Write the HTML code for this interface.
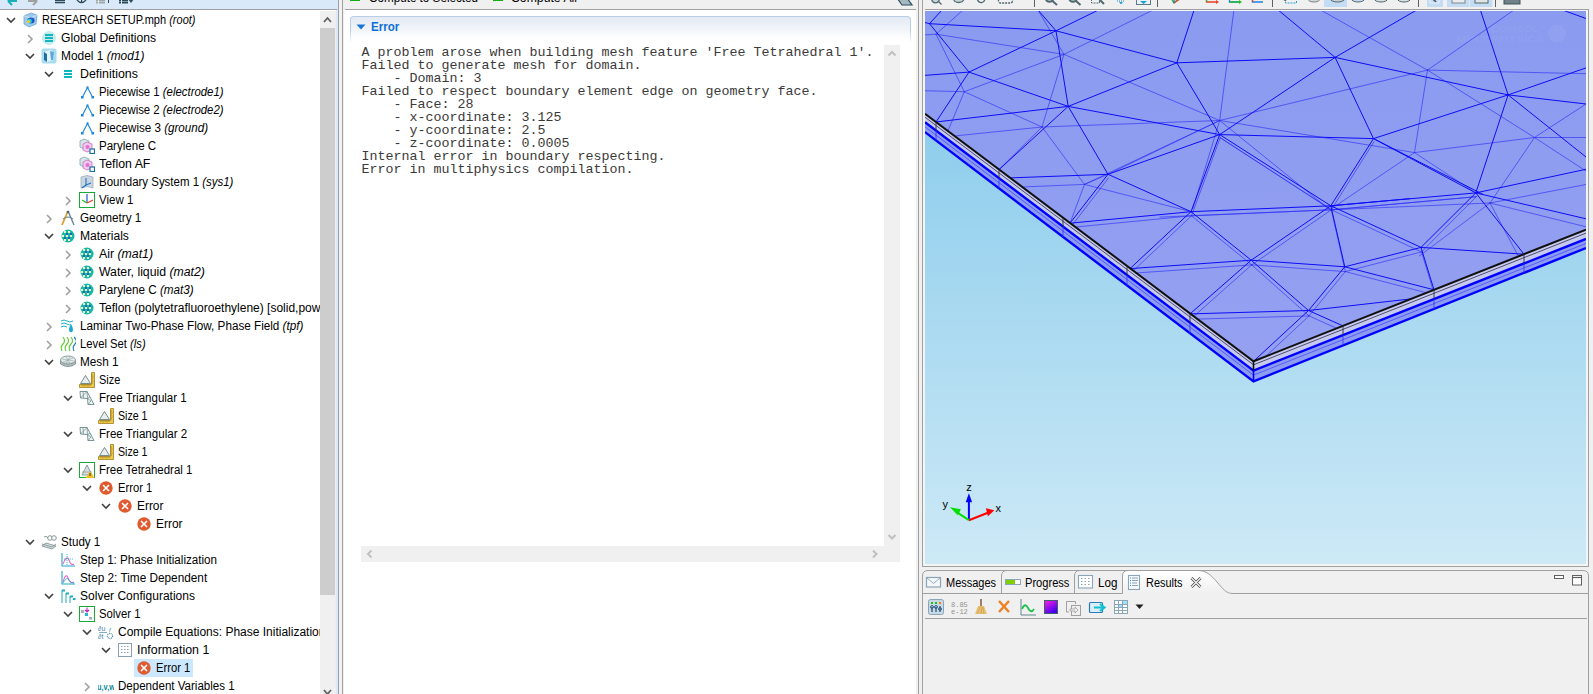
<!DOCTYPE html><html><head><meta charset="utf-8"><style>
*{margin:0;padding:0;box-sizing:border-box}
html,body{width:1593px;height:694px;overflow:hidden;background:#f0f0f0;font-family:"Liberation Sans",sans-serif;font-size:12px;color:#000}
.a{position:absolute}
.row{position:absolute;height:18px;white-space:nowrap}
.tx{position:absolute;top:0;line-height:17px;font-size:12px;transform-origin:0 0;white-space:nowrap}
.tx i{font-style:italic}
.ic{position:absolute;width:16px;height:16px}
.chev{position:absolute}
.mono{font-family:"Liberation Mono",monospace;font-size:13.33px;line-height:13px;white-space:pre;color:#3a3a3a}

</style></head><body>
<div class="a" style="left:0;top:0;width:338px;height:694px;background:#dae9f9"></div>
<div class="a" style="left:0;top:9px;width:337px;height:1px;background:#a0a0a0"></div>
<div class="a" style="left:0;top:10px;width:336px;height:684px;background:#fff"></div>
<svg class="a" style="left:0;top:0" width="140" height="9">
<path d="M8 1 L12 -3 M8 1 L12 5 M8 1 L17 1" stroke="#18b0b8" stroke-width="2" fill="none"/>
<path d="M37 1 L33 -3 M37 1 L33 5 M37 1 L28 1" stroke="#a0a0a0" stroke-width="2" fill="none"/>
<rect x="55" y="0" width="10" height="1.3" fill="#2a4a5a"/><rect x="55" y="2" width="10" height="1.3" fill="#2a4a5a"/>
<path d="M77 0 Q81.5 5 86 0" stroke="#2a4a5a" stroke-width="1.3" fill="none"/><rect x="81" y="0" width="1.2" height="2" fill="#2a4a5a"/>
<rect x="96" y="0" width="2" height="1.5" fill="#a0a8a8"/><rect x="99" y="0" width="6" height="1.5" fill="#a0a8a8"/><rect x="96" y="2" width="2" height="1.5" fill="#a0a8a8"/><rect x="99" y="2" width="6" height="1.5" fill="#a0a8a8"/><rect x="108" y="0" width="1" height="3" fill="#2a4a5a"/>
<rect x="119" y="0" width="2" height="1.5" fill="#2a4a5a"/><rect x="122" y="0" width="6" height="1.5" fill="#2a4a5a"/><rect x="119" y="2" width="2" height="1.5" fill="#2a4a5a"/><rect x="122" y="2" width="6" height="1.5" fill="#2a4a5a"/><path d="M128 -1 L134 -1 L131 3Z" fill="#2a4a5a"/>
</svg>
<div class="a" style="left:320px;top:11px;width:15px;height:683px;background:#f0f0f0"></div>
<div class="a" style="left:320px;top:28px;width:15px;height:567px;background:#cdcdcd"></div>
<div class="a" style="left:335px;top:11px;width:1px;height:683px;background:#eeeeee"></div>
<svg class="a" style="left:320px;top:11px" width="15" height="17"><path d="M4 11 L7.5 7 L11 11" stroke="#606060" stroke-width="1.8" fill="none"/></svg>
<svg class="a" style="left:320px;top:684px" width="15" height="10"><path d="M4 6 L7.5 10 L11 6" stroke="#606060" stroke-width="1.8" fill="none"/></svg>
<div class="a" style="left:338px;top:0;width:1px;height:694px;background:#a0a0a0"></div>
<div class="a" style="left:339px;top:0;width:3px;height:694px;background:#f2f2f2"></div>
<div class="a" style="left:342px;top:0;width:1px;height:694px;background:#a0a0a0"></div>
<div class="a" style="left:0;top:11px;width:320px;height:683px;overflow:hidden">
<svg class="chev" style="left:5.5px;top:4px" width="10" height="10"><path d="M1 3 L5 7 L9 3" stroke="#404040" stroke-width="1.6" fill="none"/></svg>
<svg class="ic" style="left:22px;top:1px" viewBox="0 0 16 16"><path d="M2 4 L9 1 L15 3 L14 12 L7 15 L2 12 Z" fill="#9ccbea" stroke="#6aa6d6" stroke-width="0.8"/><path d="M2 4 L9 6 L15 3" fill="none" stroke="#d8ecf8" stroke-width="0.8"/><ellipse cx="9" cy="8.5" rx="3.6" ry="3" fill="#1c58c8"/><ellipse cx="7.6" cy="9" rx="2.4" ry="2.2" fill="#2fc9d4"/><ellipse cx="6.5" cy="9.4" rx="1.6" ry="1.5" fill="#f0d020"/></svg>
<div class="tx" style="left:42px;top:1px;transform:scaleX(0.9182)">RESEARCH SETUP.mph <i>(root)</i></div>
<svg class="chev" style="left:24.5px;top:23px" width="10" height="10"><path d="M3 1 L7 5 L3 9" stroke="#a0a0a0" stroke-width="1.6" fill="none"/></svg>
<svg class="ic" style="left:41px;top:19px" viewBox="0 0 16 16"><circle cx="8" cy="8" r="7" fill="#c7ecec"/><rect x="4" y="4" width="8" height="2" fill="#10b7c0"/><rect x="4" y="7" width="8" height="2" fill="#10b7c0"/><rect x="4" y="10" width="8" height="2" fill="#10b7c0"/></svg>
<div class="tx" style="left:61px;top:19px;transform:scaleX(1.0110)">Global Definitions</div>
<svg class="chev" style="left:24.5px;top:40px" width="10" height="10"><path d="M1 3 L5 7 L9 3" stroke="#404040" stroke-width="1.6" fill="none"/></svg>
<svg class="ic" style="left:41px;top:37px" viewBox="0 0 16 16"><rect x="0.5" y="0.5" width="15" height="15" rx="2" fill="#a8dcef"/><path d="M3 4 L9 2 L13 4 L12 12 L6 14 L3 12 Z" fill="#e8f4fb"/><path d="M3 4 L6 6 L6 14 L3 12 Z" fill="#1f6fa8"/><path d="M9 3 L13 4 L12 12 L10 12 Z" fill="#5aa9d8"/></svg>
<div class="tx" style="left:61px;top:37px;transform:scaleX(0.9923)">Model 1 <i>(mod1)</i></div>
<svg class="chev" style="left:43.5px;top:58px" width="10" height="10"><path d="M1 3 L5 7 L9 3" stroke="#404040" stroke-width="1.6" fill="none"/></svg>
<svg class="ic" style="left:60px;top:55px" viewBox="0 0 16 16"><rect x="4" y="4" width="8" height="2" fill="#10b7c0"/><rect x="4" y="7" width="8" height="2" fill="#10b7c0"/><rect x="4" y="10" width="8" height="2" fill="#10b7c0"/></svg>
<div class="tx" style="left:80px;top:55px;transform:scaleX(1.0334)">Definitions</div>
<svg class="ic" style="left:79px;top:73px" viewBox="0 0 16 16"><path d="M3.5 13 L8.5 3.5 L13.5 13" fill="none" stroke="#1a88e0" stroke-width="1.1"/><rect x="2" y="12" width="2.5" height="2.5" fill="#1a88e0"/><rect x="12.5" y="12" width="2.5" height="2.5" fill="#1a88e0"/><rect x="7.5" y="2.5" width="2" height="2" fill="#1a88e0"/></svg>
<div class="tx" style="left:99px;top:73px;transform:scaleX(0.9474)">Piecewise 1 <i>(electrode1)</i></div>
<svg class="ic" style="left:79px;top:91px" viewBox="0 0 16 16"><path d="M3.5 13 L8.5 3.5 L13.5 13" fill="none" stroke="#1a88e0" stroke-width="1.1"/><rect x="2" y="12" width="2.5" height="2.5" fill="#1a88e0"/><rect x="12.5" y="12" width="2.5" height="2.5" fill="#1a88e0"/><rect x="7.5" y="2.5" width="2" height="2" fill="#1a88e0"/></svg>
<div class="tx" style="left:99px;top:91px;transform:scaleX(0.9474)">Piecewise 2 <i>(electrode2)</i></div>
<svg class="ic" style="left:79px;top:109px" viewBox="0 0 16 16"><path d="M3.5 13 L8.5 3.5 L13.5 13" fill="none" stroke="#1a88e0" stroke-width="1.1"/><rect x="2" y="12" width="2.5" height="2.5" fill="#1a88e0"/><rect x="12.5" y="12" width="2.5" height="2.5" fill="#1a88e0"/><rect x="7.5" y="2.5" width="2" height="2" fill="#1a88e0"/></svg>
<div class="tx" style="left:99px;top:109px;transform:scaleX(0.9669)">Piecewise 3 <i>(ground)</i></div>
<svg class="ic" style="left:79px;top:127px" viewBox="0 0 16 16"><path d="M1 3 L5 1 L10 3 L10 9 L5 11 L1 9Z" fill="#d8e6ec" stroke="#7aa" stroke-width="0.8"/><path d="M4 6 L8 4 L13 6 L13 12 L8 14 L4 12Z" fill="#f4c8ef" stroke="#c070b8" stroke-width="0.8"/><circle cx="8.5" cy="9" r="2" fill="#e070d0"/><rect x="11" y="11" width="4.5" height="4.5" fill="#fff" stroke="#1a6fa8" stroke-width="1.2"/></svg>
<div class="tx" style="left:99px;top:127px;transform:scaleX(0.9617)">Parylene C</div>
<svg class="ic" style="left:79px;top:145px" viewBox="0 0 16 16"><path d="M1 3 L5 1 L10 3 L10 9 L5 11 L1 9Z" fill="#d8e6ec" stroke="#7aa" stroke-width="0.8"/><path d="M4 6 L8 4 L13 6 L13 12 L8 14 L4 12Z" fill="#f4c8ef" stroke="#c070b8" stroke-width="0.8"/><circle cx="8.5" cy="9" r="2" fill="#e070d0"/><rect x="11" y="11" width="4.5" height="4.5" fill="#fff" stroke="#1a6fa8" stroke-width="1.2"/></svg>
<div class="tx" style="left:99px;top:145px;transform:scaleX(1.0274)">Teflon AF</div>
<svg class="ic" style="left:79px;top:163px" viewBox="0 0 16 16"><path d="M2 3 Q8 0 14 3 L14 14 Q8 11 2 14 Z" fill="#c9d6e0" stroke="#8fa6b8" stroke-width="0.7"/><path d="M7 4 L7 11 L12 9" fill="none" stroke="#1a6fc8" stroke-width="1.1"/><path d="M7 11 L3 14" stroke="#1a6fc8" stroke-width="1.1"/></svg>
<div class="tx" style="left:99px;top:163px;transform:scaleX(0.9550)">Boundary System 1 <i>(sys1)</i></div>
<svg class="chev" style="left:62.5px;top:185px" width="10" height="10"><path d="M3 1 L7 5 L3 9" stroke="#a0a0a0" stroke-width="1.6" fill="none"/></svg>
<svg class="ic" style="left:79px;top:181px" viewBox="0 0 16 16"><rect x="0.5" y="0.5" width="15" height="15" fill="none" stroke="#1aa838" stroke-width="1"/><path d="M8 2 L8 11" stroke="#1a58d8" stroke-width="1.2"/><path d="M8 11 L14 8" stroke="#e83a20" stroke-width="1.2"/><path d="M8 11 L3 8" stroke="#20b820" stroke-width="1.2"/></svg>
<div class="tx" style="left:99px;top:181px;transform:scaleX(0.9578)">View 1</div>
<svg class="chev" style="left:43.5px;top:203px" width="10" height="10"><path d="M3 1 L7 5 L3 9" stroke="#a0a0a0" stroke-width="1.6" fill="none"/></svg>
<svg class="ic" style="left:60px;top:199px" viewBox="0 0 16 16"><path d="M8 1 L2 15" stroke="#e0a030" stroke-width="1.8"/><path d="M8 1 L14 15" stroke="#608090" stroke-width="1.3"/><path d="M3 9 Q8 5 13 9" fill="none" stroke="#608090" stroke-width="1"/><circle cx="8" cy="2" r="1.3" fill="#506070"/></svg>
<div class="tx" style="left:80px;top:199px;transform:scaleX(0.9776)">Geometry 1</div>
<svg class="chev" style="left:43.5px;top:220px" width="10" height="10"><path d="M1 3 L5 7 L9 3" stroke="#404040" stroke-width="1.6" fill="none"/></svg>
<svg class="ic" style="left:60px;top:217px" viewBox="0 0 16 16"><circle cx="8" cy="8" r="6.5" fill="#18b8a8"/><g fill="#e8f8c0"><rect x="4" y="3" width="2" height="2"/><rect x="8" y="3" width="2" height="2"/><rect x="2" y="7" width="2" height="2"/><rect x="6" y="7" width="2" height="2"/><rect x="10" y="7" width="2" height="2"/><rect x="4" y="11" width="2" height="2"/><rect x="8" y="11" width="2" height="2"/></g><g fill="#1a68b8"><rect x="6" y="5" width="2" height="2"/><rect x="10" y="5" width="2" height="2"/><rect x="4" y="9" width="2" height="2"/><rect x="8" y="9" width="2" height="2"/></g></svg>
<div class="tx" style="left:80px;top:217px;transform:scaleX(1.0044)">Materials</div>
<svg class="chev" style="left:62.5px;top:239px" width="10" height="10"><path d="M3 1 L7 5 L3 9" stroke="#a0a0a0" stroke-width="1.6" fill="none"/></svg>
<svg class="ic" style="left:79px;top:235px" viewBox="0 0 16 16"><circle cx="8" cy="8" r="6.5" fill="#18b8a8"/><g fill="#e8f8c0"><rect x="4" y="3" width="2" height="2"/><rect x="8" y="3" width="2" height="2"/><rect x="2" y="7" width="2" height="2"/><rect x="6" y="7" width="2" height="2"/><rect x="10" y="7" width="2" height="2"/><rect x="4" y="11" width="2" height="2"/><rect x="8" y="11" width="2" height="2"/></g><g fill="#1a68b8"><rect x="6" y="5" width="2" height="2"/><rect x="10" y="5" width="2" height="2"/><rect x="4" y="9" width="2" height="2"/><rect x="8" y="9" width="2" height="2"/></g></svg>
<div class="tx" style="left:99px;top:235px;transform:scaleX(1.0252)">Air <i>(mat1)</i></div>
<svg class="chev" style="left:62.5px;top:257px" width="10" height="10"><path d="M3 1 L7 5 L3 9" stroke="#a0a0a0" stroke-width="1.6" fill="none"/></svg>
<svg class="ic" style="left:79px;top:253px" viewBox="0 0 16 16"><circle cx="8" cy="8" r="6.5" fill="#18b8a8"/><g fill="#e8f8c0"><rect x="4" y="3" width="2" height="2"/><rect x="8" y="3" width="2" height="2"/><rect x="2" y="7" width="2" height="2"/><rect x="6" y="7" width="2" height="2"/><rect x="10" y="7" width="2" height="2"/><rect x="4" y="11" width="2" height="2"/><rect x="8" y="11" width="2" height="2"/></g><g fill="#1a68b8"><rect x="6" y="5" width="2" height="2"/><rect x="10" y="5" width="2" height="2"/><rect x="4" y="9" width="2" height="2"/><rect x="8" y="9" width="2" height="2"/></g></svg>
<div class="tx" style="left:99px;top:253px;transform:scaleX(1.0223)">Water, liquid <i>(mat2)</i></div>
<svg class="chev" style="left:62.5px;top:275px" width="10" height="10"><path d="M3 1 L7 5 L3 9" stroke="#a0a0a0" stroke-width="1.6" fill="none"/></svg>
<svg class="ic" style="left:79px;top:271px" viewBox="0 0 16 16"><circle cx="8" cy="8" r="6.5" fill="#18b8a8"/><g fill="#e8f8c0"><rect x="4" y="3" width="2" height="2"/><rect x="8" y="3" width="2" height="2"/><rect x="2" y="7" width="2" height="2"/><rect x="6" y="7" width="2" height="2"/><rect x="10" y="7" width="2" height="2"/><rect x="4" y="11" width="2" height="2"/><rect x="8" y="11" width="2" height="2"/></g><g fill="#1a68b8"><rect x="6" y="5" width="2" height="2"/><rect x="10" y="5" width="2" height="2"/><rect x="4" y="9" width="2" height="2"/><rect x="8" y="9" width="2" height="2"/></g></svg>
<div class="tx" style="left:99px;top:271px;transform:scaleX(0.9725)">Parylene C <i>(mat3)</i></div>
<svg class="chev" style="left:62.5px;top:293px" width="10" height="10"><path d="M3 1 L7 5 L3 9" stroke="#a0a0a0" stroke-width="1.6" fill="none"/></svg>
<svg class="ic" style="left:79px;top:289px" viewBox="0 0 16 16"><circle cx="8" cy="8" r="6.5" fill="#18b8a8"/><g fill="#e8f8c0"><rect x="4" y="3" width="2" height="2"/><rect x="8" y="3" width="2" height="2"/><rect x="2" y="7" width="2" height="2"/><rect x="6" y="7" width="2" height="2"/><rect x="10" y="7" width="2" height="2"/><rect x="4" y="11" width="2" height="2"/><rect x="8" y="11" width="2" height="2"/></g><g fill="#1a68b8"><rect x="6" y="5" width="2" height="2"/><rect x="10" y="5" width="2" height="2"/><rect x="4" y="9" width="2" height="2"/><rect x="8" y="9" width="2" height="2"/></g></svg>
<div class="tx" style="left:99px;top:289px;transform:scaleX(1.0000)">Teflon (polytetrafluoroethylene) [solid,powder]</div>
<svg class="chev" style="left:43.5px;top:311px" width="10" height="10"><path d="M3 1 L7 5 L3 9" stroke="#a0a0a0" stroke-width="1.6" fill="none"/></svg>
<svg class="ic" style="left:60px;top:307px" viewBox="0 0 16 16"><path d="M1 3 Q4 1 7 3 T13 3 M1 6 Q4 4 7 6 T11 6 M1 9 Q4 7 7 9" fill="none" stroke="#20b0c8" stroke-width="1"/><path d="M11 6 Q14 11 12.5 13.5 Q11 15 9.5 13.5 Q8 11 11 6Z" fill="#18a8d0"/></svg>
<div class="tx" style="left:80px;top:307px;transform:scaleX(0.9745)">Laminar Two-Phase Flow, Phase Field <i>(tpf)</i></div>
<svg class="chev" style="left:43.5px;top:329px" width="10" height="10"><path d="M3 1 L7 5 L3 9" stroke="#a0a0a0" stroke-width="1.6" fill="none"/></svg>
<svg class="ic" style="left:60px;top:325px" viewBox="0 0 16 16"><path d="M2 15 Q0 11 3 8 T3 1 M6 15 Q4 11 7 8 T7 1 M10 15 Q8 11 11 8 T11 1" fill="none" stroke="#60c830" stroke-width="1.1"/><path d="M14 15 Q12 11 15 8 T14 1" fill="none" stroke="#2080c0" stroke-width="1.1"/></svg>
<div class="tx" style="left:80px;top:325px;transform:scaleX(0.9379)">Level Set <i>(ls)</i></div>
<svg class="chev" style="left:43.5px;top:346px" width="10" height="10"><path d="M1 3 L5 7 L9 3" stroke="#404040" stroke-width="1.6" fill="none"/></svg>
<svg class="ic" style="left:60px;top:343px" viewBox="0 0 16 16"><path d="M0.5 6 L0.5 10 Q8 15 15.5 10 L15.5 6" fill="#b8c4c4" stroke="#7a8c8c" stroke-width="0.8"/><ellipse cx="8" cy="6" rx="7.5" ry="4" fill="#e4ecec" stroke="#7a8c8c" stroke-width="0.8"/><path d="M2 5 L14 7 M3 8 L13 4 M6 2.5 L10 9.5 M10 2.5 L6 9.5 M1 9 L15 9 M4 9.5 L4 12.5 M8 10 L8 13 M12 9.5 L12 12.5" stroke="#8a9a9a" stroke-width="0.5"/></svg>
<div class="tx" style="left:80px;top:343px;transform:scaleX(0.9782)">Mesh 1</div>
<svg class="ic" style="left:79px;top:361px" viewBox="0 0 16 16"><path d="M12.5 0.5 L15.5 0.5 L15.5 15.5 L0.5 15.5 L0.5 12.5 L12.5 12.5 Z" fill="#f0c848" stroke="#a08020" stroke-width="0.8"/><path d="M3 12.5 L3 14 M5 12.5 L5 14.5 M7 12.5 L7 14 M9 12.5 L9 14.5 M11 12.5 L11 14 M12.5 3 L14 3 M12.5 5 L14.5 5 M12.5 7 L14 7 M12.5 9 L14.5 9 M12.5 11 L14 11" stroke="#806010" stroke-width="0.6"/><path d="M1.5 11.5 L6.5 3.5 L11.5 11.5 Z" fill="#e8eeee" stroke="#6a8080" stroke-width="0.9"/></svg>
<div class="tx" style="left:99px;top:361px;transform:scaleX(0.9124)">Size</div>
<svg class="chev" style="left:62.5px;top:382px" width="10" height="10"><path d="M1 3 L5 7 L9 3" stroke="#404040" stroke-width="1.6" fill="none"/></svg>
<svg class="ic" style="left:79px;top:379px" viewBox="0 0 16 16"><path d="M1 1.5 L8 1.5 L11 7 L15 14.5 L9 14.5 L8.5 8.5 L1.5 8 Z" fill="#f0f4f4" stroke="#6a8a8a" stroke-width="0.9"/><path d="M1.5 8 L8 1.5 L8.5 8.5 L11 7 M8.5 8.5 L12 11 L9 14.5 M4 1.5 L4.5 8" fill="none" stroke="#6a8a8a" stroke-width="0.7"/></svg>
<div class="tx" style="left:99px;top:379px;transform:scaleX(0.9596)">Free Triangular 1</div>
<svg class="ic" style="left:98px;top:397px" viewBox="0 0 16 16"><path d="M12.5 0.5 L15.5 0.5 L15.5 15.5 L0.5 15.5 L0.5 12.5 L12.5 12.5 Z" fill="#f0c848" stroke="#a08020" stroke-width="0.8"/><path d="M3 12.5 L3 14 M5 12.5 L5 14.5 M7 12.5 L7 14 M9 12.5 L9 14.5 M11 12.5 L11 14 M12.5 3 L14 3 M12.5 5 L14.5 5 M12.5 7 L14 7 M12.5 9 L14.5 9 M12.5 11 L14 11" stroke="#806010" stroke-width="0.6"/><path d="M1.5 11.5 L6.5 3.5 L11.5 11.5 Z" fill="#e8eeee" stroke="#6a8080" stroke-width="0.9"/></svg>
<div class="tx" style="left:118px;top:397px;transform:scaleX(0.8843)">Size 1</div>
<svg class="chev" style="left:62.5px;top:418px" width="10" height="10"><path d="M1 3 L5 7 L9 3" stroke="#404040" stroke-width="1.6" fill="none"/></svg>
<svg class="ic" style="left:79px;top:415px" viewBox="0 0 16 16"><path d="M1 1.5 L8 1.5 L11 7 L15 14.5 L9 14.5 L8.5 8.5 L1.5 8 Z" fill="#f0f4f4" stroke="#6a8a8a" stroke-width="0.9"/><path d="M1.5 8 L8 1.5 L8.5 8.5 L11 7 M8.5 8.5 L12 11 L9 14.5 M4 1.5 L4.5 8" fill="none" stroke="#6a8a8a" stroke-width="0.7"/></svg>
<div class="tx" style="left:99px;top:415px;transform:scaleX(0.9651)">Free Triangular 2</div>
<svg class="ic" style="left:98px;top:433px" viewBox="0 0 16 16"><path d="M12.5 0.5 L15.5 0.5 L15.5 15.5 L0.5 15.5 L0.5 12.5 L12.5 12.5 Z" fill="#f0c848" stroke="#a08020" stroke-width="0.8"/><path d="M3 12.5 L3 14 M5 12.5 L5 14.5 M7 12.5 L7 14 M9 12.5 L9 14.5 M11 12.5 L11 14 M12.5 3 L14 3 M12.5 5 L14.5 5 M12.5 7 L14 7 M12.5 9 L14.5 9 M12.5 11 L14 11" stroke="#806010" stroke-width="0.6"/><path d="M1.5 11.5 L6.5 3.5 L11.5 11.5 Z" fill="#e8eeee" stroke="#6a8080" stroke-width="0.9"/></svg>
<div class="tx" style="left:118px;top:433px;transform:scaleX(0.8843)">Size 1</div>
<svg class="chev" style="left:62.5px;top:454px" width="10" height="10"><path d="M1 3 L5 7 L9 3" stroke="#404040" stroke-width="1.6" fill="none"/></svg>
<svg class="ic" style="left:79px;top:451px" viewBox="0 0 16 16"><rect x="0.5" y="0.5" width="15" height="15" fill="#fff" stroke="#1aa838" stroke-width="1"/><path d="M3 13 L8 3 L13 13 Z" fill="#d8e0e0" stroke="#708888" stroke-width="0.8"/><path d="M3 10 L13 10" stroke="#708888" stroke-width="0.6"/><path d="M11 9 L15.5 16 L6.5 16 Z" fill="#f0c020"/><rect x="10.5" y="11" width="1" height="3" fill="#333"/></svg>
<div class="tx" style="left:99px;top:451px;transform:scaleX(0.9546)">Free Tetrahedral 1</div>
<svg class="chev" style="left:81.5px;top:472px" width="10" height="10"><path d="M1 3 L5 7 L9 3" stroke="#404040" stroke-width="1.6" fill="none"/></svg>
<svg class="ic" style="left:98px;top:469px" viewBox="0 0 16 16"><circle cx="8" cy="8" r="6.7" fill="#e05a30"/><path d="M5 5 L11 11 M11 5 L5 11" stroke="#fff" stroke-width="1.7"/></svg>
<div class="tx" style="left:118px;top:469px;transform:scaleX(0.9322)">Error 1</div>
<svg class="chev" style="left:100.5px;top:490px" width="10" height="10"><path d="M1 3 L5 7 L9 3" stroke="#404040" stroke-width="1.6" fill="none"/></svg>
<svg class="ic" style="left:117px;top:487px" viewBox="0 0 16 16"><circle cx="8" cy="8" r="6.7" fill="#e05a30"/><path d="M5 5 L11 11 M11 5 L5 11" stroke="#fff" stroke-width="1.7"/></svg>
<div class="tx" style="left:137px;top:487px;transform:scaleX(0.9898)">Error</div>
<svg class="ic" style="left:136px;top:505px" viewBox="0 0 16 16"><circle cx="8" cy="8" r="6.7" fill="#e05a30"/><path d="M5 5 L11 11 M11 5 L5 11" stroke="#fff" stroke-width="1.7"/></svg>
<div class="tx" style="left:156px;top:505px;transform:scaleX(0.9936)">Error</div>
<svg class="chev" style="left:24.5px;top:526px" width="10" height="10"><path d="M1 3 L5 7 L9 3" stroke="#404040" stroke-width="1.6" fill="none"/></svg>
<svg class="ic" style="left:41px;top:523px" viewBox="0 0 16 16"><path d="M1 12 L11 15 L15 12 L5 9Z" fill="#d8e0e0" stroke="#7a8c8c" stroke-width="0.8"/><path d="M1 10 L11 13 L15 10" fill="none" stroke="#7a8c8c" stroke-width="0.8"/><circle cx="9" cy="4" r="2.3" fill="#fff" stroke="#7a8c8c" stroke-width="0.9"/><circle cx="13" cy="4" r="2.3" fill="#fff" stroke="#7a8c8c" stroke-width="0.9"/><path d="M3 3 Q5 1 7 4" fill="none" stroke="#7a8c8c" stroke-width="0.9"/></svg>
<div class="tx" style="left:61px;top:523px;transform:scaleX(0.9655)">Study 1</div>
<svg class="ic" style="left:60px;top:541px" viewBox="0 0 16 16"><path d="M2 1 L2 14 L15 14" fill="none" stroke="#20a8c8" stroke-width="1.1"/><path d="M3 12 Q7 2 9 8 T14 12" fill="none" stroke="#e070d0" stroke-width="1.1"/><path d="M4 7 L13 7" stroke="#20a8c8" stroke-width="0.8" stroke-dasharray="1,1"/><path d="M7 2 L7 13" stroke="#20a8c8" stroke-width="0.8" stroke-dasharray="1,1"/></svg>
<div class="tx" style="left:80px;top:541px;transform:scaleX(0.9687)">Step 1: Phase Initialization</div>
<svg class="ic" style="left:60px;top:559px" viewBox="0 0 16 16"><path d="M2 1 L2 14 L15 14" fill="none" stroke="#20a8c8" stroke-width="1.1"/><path d="M3 12 Q6 2 8 8 T14 12" fill="none" stroke="#e070d0" stroke-width="1.1"/><path d="M3 13 Q7 6 9 10 T14 13" fill="none" stroke="#20a8c8" stroke-width="0.8"/></svg>
<div class="tx" style="left:80px;top:559px;transform:scaleX(0.9828)">Step 2: Time Dependent</div>
<svg class="chev" style="left:43.5px;top:580px" width="10" height="10"><path d="M1 3 L5 7 L9 3" stroke="#404040" stroke-width="1.6" fill="none"/></svg>
<svg class="ic" style="left:60px;top:577px" viewBox="0 0 16 16"><path d="M2 2 L2 15 M6 5 L6 15 M10 8 L10 15" stroke="#20a8c8" stroke-width="1"/><rect x="2" y="1.5" width="3" height="2" fill="#20a8c8"/><rect x="6" y="4.5" width="3" height="2" fill="#20a8c8"/><rect x="10" y="7.5" width="3" height="2" fill="#20a8c8"/><rect x="13" y="10" width="2.5" height="2" fill="#20a8c8"/></svg>
<div class="tx" style="left:80px;top:577px;transform:scaleX(1.0023)">Solver Configurations</div>
<svg class="chev" style="left:62.5px;top:598px" width="10" height="10"><path d="M1 3 L5 7 L9 3" stroke="#404040" stroke-width="1.6" fill="none"/></svg>
<svg class="ic" style="left:79px;top:595px" viewBox="0 0 16 16"><rect x="0.5" y="0.5" width="15" height="15" fill="#fff" stroke="#1aa838" stroke-width="1"/><rect x="2" y="4" width="3" height="3" fill="#a0b0b8"/><rect x="6" y="7" width="3" height="3" fill="#20b8d8"/><rect x="10" y="11" width="3" height="2.5" fill="#a0b0b8"/><path d="M8 1.5 L8 6 M6 4 L8 6 L10 4" fill="none" stroke="#c020c0" stroke-width="1.1"/></svg>
<div class="tx" style="left:99px;top:595px;transform:scaleX(0.9425)">Solver 1</div>
<svg class="chev" style="left:81.5px;top:616px" width="10" height="10"><path d="M1 3 L5 7 L9 3" stroke="#404040" stroke-width="1.6" fill="none"/></svg>
<svg class="ic" style="left:98px;top:613px" viewBox="0 0 16 16"><text x="0" y="7" font-family="Liberation Sans" font-size="7" fill="#4a88b0">&#8706;u</text><path d="M1 8.5 L9 8.5" stroke="#4a88b0" stroke-width="0.7"/><text x="0" y="15" font-family="Liberation Sans" font-size="7" fill="#4a88b0">&#8706;t</text><circle cx="12" cy="12" r="2.6" fill="none" stroke="#4a88b0" stroke-width="1.2" stroke-dasharray="1,0.8"/><text x="11" y="8" font-family="Liberation Sans" font-size="6" font-style="italic" fill="#4a88b0">f</text></svg>
<div class="tx" style="left:118px;top:613px;transform:scaleX(1.0000)">Compile Equations: Phase Initialization</div>
<svg class="chev" style="left:100.5px;top:634px" width="10" height="10"><path d="M1 3 L5 7 L9 3" stroke="#404040" stroke-width="1.6" fill="none"/></svg>
<svg class="ic" style="left:117px;top:631px" viewBox="0 0 16 16"><rect x="1.5" y="1.5" width="13" height="13" fill="#fff" stroke="#8aa0b0" stroke-width="1"/><g fill="#8aa0b0"><rect x="4" y="4" width="1.5" height="1"/><rect x="7" y="4" width="1.5" height="1"/><rect x="10" y="4" width="1.5" height="1"/><rect x="4" y="7" width="1.5" height="1"/><rect x="7" y="7" width="1.5" height="1"/><rect x="10" y="7" width="1.5" height="1"/><rect x="4" y="10" width="1.5" height="1"/><rect x="7" y="10" width="1.5" height="1"/><rect x="10" y="10" width="1.5" height="1"/></g></svg>
<div class="tx" style="left:137px;top:631px;transform:scaleX(1.0322)">Information 1</div>
<div class="a" style="left:134px;top:648px;width:59px;height:18px;background:#cce8ff"></div>
<svg class="ic" style="left:136px;top:649px" viewBox="0 0 16 16"><circle cx="8" cy="8" r="6.7" fill="#e05a30"/><path d="M5 5 L11 11 M11 5 L5 11" stroke="#fff" stroke-width="1.7"/></svg>
<div class="tx" style="left:156px;top:649px;transform:scaleX(0.9349)">Error 1</div>
<svg class="chev" style="left:81.5px;top:671px" width="10" height="10"><path d="M3 1 L7 5 L3 9" stroke="#a0a0a0" stroke-width="1.6" fill="none"/></svg>
<svg class="ic" style="left:98px;top:667px" viewBox="0 0 16 16"><text x="-1" y="12" font-family="Liberation Sans" font-size="8.5" font-weight="bold" fill="#108898" textLength="18" lengthAdjust="spacingAndGlyphs">u,v,w</text></svg>
<div class="tx" style="left:118px;top:667px;transform:scaleX(0.9628)">Dependent Variables 1</div>
</div>
<div class="a" style="left:343px;top:0;width:1px;height:694px;background:#f0f0f0"></div>
<div class="a" style="left:345px;top:9px;width:571px;height:1px;background:#a0a0a0"></div>
<div class="a" style="left:344px;top:10px;width:572px;height:684px;background:#fff"></div>
<div class="a" style="left:344px;top:9px;width:1px;height:1px;background:#f0f0f0"></div>
<div class="a" style="left:350px;top:-2px;width:10px;height:3px;background:#10b010"></div>
<div class="a" style="left:493px;top:-2px;width:10px;height:3px;background:#10b010"></div>
<div class="a" style="left:369px;top:-9px;line-height:14px;font-size:12px;white-space:nowrap;transform-origin:0 0;transform:scaleX(0.973)">Compute to Selected</div>
<div class="a" style="left:511px;top:-9px;line-height:14px;font-size:12px;white-space:nowrap;transform-origin:0 0;transform:scaleX(1.02)">Compute All</div>
<svg class="a" style="left:895px;top:0" width="20" height="9"><path d="M2 -2 L12 -2 L17 5 L7 5 Z" fill="#a8b8c0" stroke="#2a5060" stroke-width="1.2"/></svg>
<div class="a" style="left:350px;top:16px;width:561px;height:26px;border:1px solid #b9cde5;border-bottom:none;border-radius:4px 4px 0 0;background:linear-gradient(#e3eaf4,#ffffff)"></div>
<div class="a" style="left:350px;top:30px;width:561px;height:14px;background:linear-gradient(rgba(255,255,255,0),#fff)"></div>
<svg class="a" style="left:356px;top:24px" width="10" height="6"><path d="M0.5 0.5 L9.5 0.5 L5 5.5Z" fill="#1a74d8"/></svg>
<div class="a" style="left:371px;top:19px;line-height:17px;font-size:12px;font-weight:bold;color:#0c6fd6;white-space:nowrap;transform-origin:0 0;transform:scaleX(0.96)">Error</div>
<div class="a mono" style="left:361.5px;top:46px">A problem arose when building mesh feature &#39;Free Tetrahedral 1&#39;.
Failed to generate mesh for domain.
    - Domain: 3
Failed to respect boundary element edge on geometry face.
    - Face: 28
    - x-coordinate: 3.125
    - y-coordinate: 2.5
    - z-coordinate: 0.0005
Internal error in boundary respecting.
Error in multiphysics compilation.</div>
<div class="a" style="left:884px;top:45px;width:16px;height:517px;background:#f0f0f0"></div>
<div class="a" style="left:361px;top:546px;width:539px;height:16px;background:#f0f0f0"></div>
<svg class="a" style="left:884px;top:45px" width="16" height="16"><path d="M4.5 10.5 L8 7 L11.5 10.5" stroke="#c0c0c0" stroke-width="2" fill="none"/></svg>
<svg class="a" style="left:884px;top:530px" width="16" height="16"><path d="M4.5 5 L8 8.5 L11.5 5" stroke="#c0c0c0" stroke-width="2" fill="none"/></svg>
<svg class="a" style="left:361px;top:546px" width="16" height="16"><path d="M10.5 4.5 L7 8 L10.5 11.5" stroke="#c0c0c0" stroke-width="2" fill="none"/></svg>
<svg class="a" style="left:868px;top:546px" width="16" height="16"><path d="M5 4.5 L8.5 8 L5 11.5" stroke="#c0c0c0" stroke-width="2" fill="none"/></svg>
<div class="a" style="left:918px;top:0;width:1px;height:694px;background:#a0a0a0"></div>
<div class="a" style="left:922px;top:0;width:1px;height:694px;background:#a0a0a0"></div>
<div class="a" style="left:925px;top:9px;width:663px;height:1px;background:#a0a0a0"></div>
<div class="a" style="left:923px;top:10px;width:665px;height:556px;background:#f4f4f4"></div>
<div class="a" style="left:1588px;top:9px;width:1px;height:558px;background:#a0a0a0"></div>
<div class="a" style="left:922px;top:566px;width:667px;height:1px;background:#a0a0a0"></div>
<svg class="a" style="left:925px;top:11px" width="661" height="553" viewBox="0 0 661 553">
<defs><linearGradient id="sky" x1="0" y1="0" x2="0" y2="1"><stop offset="0" stop-color="#7dc6ea"/><stop offset="1" stop-color="#cde9f6"/></linearGradient>
<clipPath id="cp"><polygon points="0.0,0.0 661.0,0.0 661.0,218.6 328.5,350.3 0.0,102.7"/></clipPath></defs>
<rect x="0" y="0" width="661" height="553" fill="url(#sky)"/>
<polygon points="0.0,111.3 328.5,359.6 661.0,227.9 661.0,237.0 328.5,370.4 0.0,121.1" fill="#8c9cf0"/>
<polygon points="0.0,102.7 328.5,350.3 661.0,218.6 661.0,227.9 328.5,359.6 0.0,111.3" fill="#c6c9f0"/>
<linearGradient id="pl" gradientUnits="userSpaceOnUse" x1="0" y1="0" x2="0" y2="350"><stop offset="0" stop-color="#8a9bf0"/><stop offset="1" stop-color="#95a0f1"/></linearGradient>
<polygon points="0.0,0.0 661.0,0.0 661.0,218.6 328.5,350.3 0.0,102.7" fill="url(#pl)"/>
<g clip-path="url(#cp)" stroke-linecap="round">
<line x1="11.0" y1="23.2" x2="139.0" y2="43.4" stroke="#2828f8" stroke-width="0.75" stroke-opacity="0.8"/>
<line x1="139.0" y1="43.4" x2="294.7" y2="109.5" stroke="#2828f8" stroke-width="0.75" stroke-opacity="0.8"/>
<line x1="139.0" y1="43.4" x2="117.0" y2="116.0" stroke="#2828f8" stroke-width="0.75" stroke-opacity="0.8"/>
<line x1="39.3" y1="80.7" x2="139.0" y2="43.4" stroke="#2828f8" stroke-width="0.75" stroke-opacity="0.8"/>
<line x1="39.3" y1="80.7" x2="117.0" y2="116.0" stroke="#2828f8" stroke-width="0.75" stroke-opacity="0.8"/>
<line x1="39.3" y1="80.7" x2="11.0" y2="23.2" stroke="#2828f8" stroke-width="0.75" stroke-opacity="0.8"/>
<line x1="117.0" y1="116.0" x2="294.7" y2="109.5" stroke="#2828f8" stroke-width="0.75" stroke-opacity="0.8"/>
<line x1="294.7" y1="109.5" x2="502.5" y2="59.1" stroke="#2828f8" stroke-width="0.75" stroke-opacity="0.8"/>
<line x1="502.5" y1="59.1" x2="489.5" y2="141.6" stroke="#2828f8" stroke-width="0.75" stroke-opacity="0.8"/>
<line x1="502.5" y1="59.1" x2="609.5" y2="126.5" stroke="#2828f8" stroke-width="0.75" stroke-opacity="0.8"/>
<line x1="609.5" y1="126.5" x2="489.5" y2="141.6" stroke="#2828f8" stroke-width="0.75" stroke-opacity="0.8"/>
<line x1="609.5" y1="126.5" x2="565.0" y2="192.0" stroke="#2828f8" stroke-width="0.75" stroke-opacity="0.8"/>
<line x1="489.5" y1="141.6" x2="550.8" y2="181.9" stroke="#2828f8" stroke-width="0.75" stroke-opacity="0.8"/>
<line x1="159.5" y1="173.4" x2="183.0" y2="163.3" stroke="#2828f8" stroke-width="0.75" stroke-opacity="0.8"/>
<line x1="159.5" y1="173.4" x2="117.0" y2="116.0" stroke="#2828f8" stroke-width="0.75" stroke-opacity="0.8"/>
<line x1="159.5" y1="173.4" x2="145.0" y2="212.2" stroke="#2828f8" stroke-width="0.75" stroke-opacity="0.8"/>
<line x1="159.5" y1="173.4" x2="266.0" y2="200.7" stroke="#2828f8" stroke-width="0.75" stroke-opacity="0.8"/>
<line x1="565.0" y1="192.0" x2="494.3" y2="245.0" stroke="#2828f8" stroke-width="0.75" stroke-opacity="0.8"/>
<line x1="183.0" y1="163.3" x2="294.7" y2="109.5" stroke="#2828f8" stroke-width="0.75" stroke-opacity="0.8"/>
<line x1="489.5" y1="141.6" x2="294.7" y2="109.5" stroke="#2828f8" stroke-width="0.75" stroke-opacity="0.8"/>
<line x1="294.7" y1="109.5" x2="159.5" y2="173.4" stroke="#2828f8" stroke-width="0.75" stroke-opacity="0.8"/>
<line x1="117.0" y1="116.0" x2="74.0" y2="158.6" stroke="#2828f8" stroke-width="0.75" stroke-opacity="0.8"/>
<line x1="139.0" y1="43.4" x2="376.0" y2="-74.8" stroke="#2828f8" stroke-width="0.75" stroke-opacity="0.8"/>
<line x1="139.0" y1="43.4" x2="61.0" y2="-89.8" stroke="#2828f8" stroke-width="0.75" stroke-opacity="0.8"/>
<line x1="39.3" y1="80.7" x2="-84.6" y2="77.7" stroke="#2828f8" stroke-width="0.75" stroke-opacity="0.8"/>
<line x1="39.3" y1="80.7" x2="-33.6" y2="255.6" stroke="#2828f8" stroke-width="0.75" stroke-opacity="0.8"/>
<line x1="11.0" y1="23.2" x2="92.0" y2="-49.4" stroke="#2828f8" stroke-width="0.75" stroke-opacity="0.8"/>
<line x1="11.0" y1="23.2" x2="-28.0" y2="25.6" stroke="#2828f8" stroke-width="0.75" stroke-opacity="0.8"/>
<line x1="117.0" y1="116.0" x2="-204.0" y2="149.0" stroke="#2828f8" stroke-width="0.75" stroke-opacity="0.8"/>
<line x1="294.7" y1="109.5" x2="337.3" y2="-222.0" stroke="#2828f8" stroke-width="0.75" stroke-opacity="0.8"/>
<line x1="294.7" y1="109.5" x2="267.7" y2="198.0" stroke="#2828f8" stroke-width="0.75" stroke-opacity="0.8"/>
<line x1="395.6" y1="-1.0" x2="502.5" y2="59.1" stroke="#2828f8" stroke-width="0.75" stroke-opacity="0.8"/>
<line x1="294.7" y1="109.5" x2="404.0" y2="198.0" stroke="#2828f8" stroke-width="0.75" stroke-opacity="0.8"/>
<line x1="489.5" y1="141.6" x2="406.0" y2="198.0" stroke="#2828f8" stroke-width="0.75" stroke-opacity="0.8"/>
<line x1="502.5" y1="59.1" x2="762.0" y2="-121.2" stroke="#2828f8" stroke-width="0.75" stroke-opacity="0.8"/>
<line x1="502.5" y1="59.1" x2="978.0" y2="69.9" stroke="#2828f8" stroke-width="0.75" stroke-opacity="0.8"/>
<line x1="609.5" y1="126.5" x2="764.0" y2="26.0" stroke="#2828f8" stroke-width="0.75" stroke-opacity="0.8"/>
<line x1="609.5" y1="126.5" x2="764.0" y2="126.5" stroke="#2828f8" stroke-width="0.75" stroke-opacity="0.8"/>
<line x1="609.5" y1="126.5" x2="713.0" y2="194.0" stroke="#2828f8" stroke-width="0.75" stroke-opacity="0.8"/>
<line x1="159.5" y1="173.4" x2="-58.0" y2="182.4" stroke="#2828f8" stroke-width="0.75" stroke-opacity="0.8"/>
<line x1="565.0" y1="192.0" x2="235.0" y2="206.1" stroke="#2828f8" stroke-width="0.75" stroke-opacity="0.8"/>
<line x1="565.0" y1="192.0" x2="853.0" y2="136.5" stroke="#2828f8" stroke-width="0.75" stroke-opacity="0.8"/>
<line x1="565.0" y1="192.0" x2="853.0" y2="263.4" stroke="#2828f8" stroke-width="0.75" stroke-opacity="0.8"/>
<line x1="565.0" y1="192.0" x2="670.6" y2="390.0" stroke="#2828f8" stroke-width="0.75" stroke-opacity="0.8"/>
<line x1="295.2" y1="126.7" x2="406.3" y2="198.8" stroke="#2828f8" stroke-width="0.75" stroke-opacity="0.8"/>
<line x1="295.2" y1="126.7" x2="266.5" y2="204.8" stroke="#2828f8" stroke-width="0.75" stroke-opacity="0.8"/>
<line x1="266.5" y1="204.8" x2="406.3" y2="198.8" stroke="#2828f8" stroke-width="0.75" stroke-opacity="0.8"/>
<line x1="266.5" y1="204.8" x2="326.7" y2="253.9" stroke="#2828f8" stroke-width="0.75" stroke-opacity="0.8"/>
<line x1="406.3" y1="198.8" x2="326.7" y2="253.9" stroke="#2828f8" stroke-width="0.75" stroke-opacity="0.8"/>
<line x1="406.3" y1="198.8" x2="420.3" y2="260.6" stroke="#2828f8" stroke-width="0.75" stroke-opacity="0.8"/>
<line x1="406.3" y1="198.8" x2="496.5" y2="240.9" stroke="#2828f8" stroke-width="0.75" stroke-opacity="0.8"/>
<line x1="326.7" y1="253.9" x2="420.3" y2="260.6" stroke="#2828f8" stroke-width="0.75" stroke-opacity="0.8"/>
<line x1="326.7" y1="253.9" x2="384.0" y2="304.9" stroke="#2828f8" stroke-width="0.75" stroke-opacity="0.8"/>
<line x1="420.3" y1="260.6" x2="496.5" y2="240.9" stroke="#2828f8" stroke-width="0.75" stroke-opacity="0.8"/>
<line x1="420.3" y1="260.6" x2="384.0" y2="304.9" stroke="#2828f8" stroke-width="0.75" stroke-opacity="0.8"/>
<line x1="551.3" y1="185.7" x2="496.5" y2="240.9" stroke="#2828f8" stroke-width="0.75" stroke-opacity="0.8"/>
<line x1="496.5" y1="240.9" x2="509.5" y2="283.9" stroke="#2828f8" stroke-width="0.75" stroke-opacity="0.8"/>
<line x1="384.0" y1="304.9" x2="418.5" y2="320.4" stroke="#2828f8" stroke-width="0.75" stroke-opacity="0.8"/>
<line x1="326.7" y1="253.9" x2="265.5" y2="308.3" stroke="#2828f8" stroke-width="0.75" stroke-opacity="0.8"/>
<line x1="384.0" y1="304.9" x2="265.5" y2="308.3" stroke="#2828f8" stroke-width="0.75" stroke-opacity="0.8"/>
<line x1="406.3" y1="198.8" x2="551.3" y2="185.7" stroke="#2828f8" stroke-width="0.75" stroke-opacity="0.8"/>
<line x1="449.0" y1="130.7" x2="406.3" y2="198.8" stroke="#2828f8" stroke-width="0.75" stroke-opacity="0.8"/>
<line x1="420.3" y1="260.6" x2="509.5" y2="283.9" stroke="#2828f8" stroke-width="0.75" stroke-opacity="0.8"/>
<line x1="326.7" y1="253.9" x2="205.5" y2="262.4" stroke="#2828f8" stroke-width="0.75" stroke-opacity="0.8"/>
<line x1="384.0" y1="304.9" x2="329.0" y2="356.3" stroke="#2828f8" stroke-width="0.75" stroke-opacity="0.8"/>
<line x1="266.5" y1="204.8" x2="145.5" y2="216.5" stroke="#2828f8" stroke-width="0.75" stroke-opacity="0.8"/>
<line x1="266.5" y1="204.8" x2="205.5" y2="262.4" stroke="#2828f8" stroke-width="0.75" stroke-opacity="0.8"/>
<line x1="183.5" y1="166.9" x2="145.5" y2="216.5" stroke="#2828f8" stroke-width="0.75" stroke-opacity="0.8"/>
<line x1="295.2" y1="126.7" x2="406.3" y2="198.8" stroke="#2828f8" stroke-width="0.75" stroke-opacity="0.8"/>
<line x1="406.3" y1="198.8" x2="551.3" y2="185.7" stroke="#2828f8" stroke-width="0.75" stroke-opacity="0.8"/>
<line x1="4.5" y1="12.7" x2="131.0" y2="19.8" stroke="#0c0cf8" stroke-width="1.0"/>
<line x1="4.5" y1="12.7" x2="44.0" y2="61.1" stroke="#0c0cf8" stroke-width="1.0"/>
<line x1="131.0" y1="19.8" x2="251.8" y2="51.8" stroke="#0c0cf8" stroke-width="1.0"/>
<line x1="131.0" y1="19.8" x2="143.2" y2="95.4" stroke="#0c0cf8" stroke-width="1.0"/>
<line x1="44.0" y1="61.1" x2="131.0" y2="19.8" stroke="#0c0cf8" stroke-width="1.0"/>
<line x1="44.0" y1="61.1" x2="143.2" y2="95.4" stroke="#0c0cf8" stroke-width="1.0"/>
<line x1="44.0" y1="61.1" x2="11.0" y2="111.0" stroke="#0c0cf8" stroke-width="1.0"/>
<line x1="143.2" y1="95.4" x2="251.8" y2="51.8" stroke="#0c0cf8" stroke-width="1.0"/>
<line x1="143.2" y1="95.4" x2="294.7" y2="123.6" stroke="#0c0cf8" stroke-width="1.0"/>
<line x1="143.2" y1="95.4" x2="183.0" y2="163.3" stroke="#0c0cf8" stroke-width="1.0"/>
<line x1="143.2" y1="95.4" x2="11.0" y2="111.0" stroke="#0c0cf8" stroke-width="1.0"/>
<line x1="143.2" y1="95.4" x2="74.0" y2="158.6" stroke="#0c0cf8" stroke-width="1.0"/>
<line x1="251.8" y1="51.8" x2="410.1" y2="46.4" stroke="#0c0cf8" stroke-width="1.0"/>
<line x1="251.8" y1="51.8" x2="294.7" y2="123.6" stroke="#0c0cf8" stroke-width="1.0"/>
<line x1="410.1" y1="46.4" x2="583.1" y2="83.9" stroke="#0c0cf8" stroke-width="1.0"/>
<line x1="410.1" y1="46.4" x2="448.5" y2="127.6" stroke="#0c0cf8" stroke-width="1.0"/>
<line x1="410.1" y1="46.4" x2="294.7" y2="123.6" stroke="#0c0cf8" stroke-width="1.0"/>
<line x1="294.7" y1="123.6" x2="405.8" y2="194.8" stroke="#0c0cf8" stroke-width="1.0"/>
<line x1="294.7" y1="123.6" x2="266.0" y2="200.7" stroke="#0c0cf8" stroke-width="1.0"/>
<line x1="294.7" y1="123.6" x2="448.5" y2="127.6" stroke="#0c0cf8" stroke-width="1.0"/>
<line x1="294.7" y1="123.6" x2="183.0" y2="163.3" stroke="#0c0cf8" stroke-width="1.0"/>
<line x1="583.1" y1="83.9" x2="448.5" y2="127.6" stroke="#0c0cf8" stroke-width="1.0"/>
<line x1="583.1" y1="83.9" x2="550.8" y2="181.9" stroke="#0c0cf8" stroke-width="1.0"/>
<line x1="448.5" y1="127.6" x2="550.8" y2="181.9" stroke="#0c0cf8" stroke-width="1.0"/>
<line x1="448.5" y1="127.6" x2="405.8" y2="194.8" stroke="#0c0cf8" stroke-width="1.0"/>
<line x1="183.0" y1="163.3" x2="266.0" y2="200.7" stroke="#0c0cf8" stroke-width="1.0"/>
<line x1="183.0" y1="163.3" x2="85.0" y2="166.9" stroke="#0c0cf8" stroke-width="1.0"/>
<line x1="183.0" y1="163.3" x2="145.0" y2="212.2" stroke="#0c0cf8" stroke-width="1.0"/>
<line x1="266.0" y1="200.7" x2="145.0" y2="212.2" stroke="#0c0cf8" stroke-width="1.0"/>
<line x1="266.0" y1="200.7" x2="405.8" y2="194.8" stroke="#0c0cf8" stroke-width="1.0"/>
<line x1="266.0" y1="200.7" x2="326.2" y2="249.2" stroke="#0c0cf8" stroke-width="1.0"/>
<line x1="266.0" y1="200.7" x2="205.0" y2="257.6" stroke="#0c0cf8" stroke-width="1.0"/>
<line x1="405.8" y1="194.8" x2="326.2" y2="249.2" stroke="#0c0cf8" stroke-width="1.0"/>
<line x1="405.8" y1="194.8" x2="419.8" y2="255.8" stroke="#0c0cf8" stroke-width="1.0"/>
<line x1="405.8" y1="194.8" x2="550.8" y2="181.9" stroke="#0c0cf8" stroke-width="1.0"/>
<line x1="405.8" y1="194.8" x2="496.0" y2="236.4" stroke="#0c0cf8" stroke-width="1.0"/>
<line x1="326.2" y1="249.2" x2="205.0" y2="257.6" stroke="#0c0cf8" stroke-width="1.0"/>
<line x1="326.2" y1="249.2" x2="265.0" y2="302.9" stroke="#0c0cf8" stroke-width="1.0"/>
<line x1="326.2" y1="249.2" x2="419.8" y2="255.8" stroke="#0c0cf8" stroke-width="1.0"/>
<line x1="326.2" y1="249.2" x2="383.5" y2="299.5" stroke="#0c0cf8" stroke-width="1.0"/>
<line x1="419.8" y1="255.8" x2="496.0" y2="236.4" stroke="#0c0cf8" stroke-width="1.0"/>
<line x1="419.8" y1="255.8" x2="383.5" y2="299.5" stroke="#0c0cf8" stroke-width="1.0"/>
<line x1="419.8" y1="255.8" x2="509.0" y2="278.8" stroke="#0c0cf8" stroke-width="1.0"/>
<line x1="550.8" y1="181.9" x2="496.0" y2="236.4" stroke="#0c0cf8" stroke-width="1.0"/>
<line x1="550.8" y1="181.9" x2="599.0" y2="243.2" stroke="#0c0cf8" stroke-width="1.0"/>
<line x1="496.0" y1="236.4" x2="509.0" y2="278.8" stroke="#0c0cf8" stroke-width="1.0"/>
<line x1="496.0" y1="236.4" x2="599.0" y2="243.2" stroke="#0c0cf8" stroke-width="1.0"/>
<line x1="383.5" y1="299.5" x2="265.0" y2="302.9" stroke="#0c0cf8" stroke-width="1.0"/>
<line x1="383.5" y1="299.5" x2="328.5" y2="350.3" stroke="#0c0cf8" stroke-width="1.0"/>
<line x1="383.5" y1="299.5" x2="418.0" y2="314.9" stroke="#0c0cf8" stroke-width="1.0"/>
<line x1="383.5" y1="299.5" x2="486.0" y2="287.9" stroke="#0c0cf8" stroke-width="1.0"/>
<line x1="4.5" y1="12.7" x2="42.0" y2="-28.4" stroke="#0c0cf8" stroke-width="1.0"/>
<line x1="4.5" y1="12.7" x2="-15.0" y2="7.6" stroke="#0c0cf8" stroke-width="1.0"/>
<line x1="131.0" y1="19.8" x2="258.2" y2="-42.6" stroke="#0c0cf8" stroke-width="1.0"/>
<line x1="131.0" y1="19.8" x2="77.0" y2="-42.6" stroke="#0c0cf8" stroke-width="1.0"/>
<line x1="44.0" y1="61.1" x2="-94.0" y2="71.3" stroke="#0c0cf8" stroke-width="1.0"/>
<line x1="251.8" y1="51.8" x2="303.7" y2="-106.6" stroke="#0c0cf8" stroke-width="1.0"/>
<line x1="410.1" y1="46.4" x2="239.4" y2="-95.8" stroke="#0c0cf8" stroke-width="1.0"/>
<line x1="410.1" y1="46.4" x2="654.9" y2="-95.8" stroke="#0c0cf8" stroke-width="1.0"/>
<line x1="583.1" y1="83.9" x2="500.0" y2="-170.8" stroke="#0c0cf8" stroke-width="1.0"/>
<line x1="583.1" y1="83.9" x2="816.8" y2="2.9" stroke="#0c0cf8" stroke-width="1.0"/>
<line x1="583.1" y1="83.9" x2="816.8" y2="111.2" stroke="#0c0cf8" stroke-width="1.0"/>
<line x1="583.1" y1="83.9" x2="816.8" y2="270.2" stroke="#0c0cf8" stroke-width="1.0"/>
<line x1="637.6" y1="-1.0" x2="685.0" y2="16.3" stroke="#0c0cf8" stroke-width="1.0"/>
<line x1="550.8" y1="181.9" x2="881.4" y2="111.1" stroke="#0c0cf8" stroke-width="1.0"/>
<line x1="550.8" y1="181.9" x2="881.4" y2="259.6" stroke="#0c0cf8" stroke-width="1.0"/>
<line x1="448.5" y1="127.6" x2="558.0" y2="183.4" stroke="#0c0cf8" stroke-width="1.0"/>
<line x1="405.8" y1="194.8" x2="485.0" y2="187.6" stroke="#0c0cf8" stroke-width="1.0"/>
</g>
<polyline points="0.0,121.1 328.5,370.4 661.0,237.0" fill="none" stroke="#0000ff" stroke-width="2.4"/>
<polyline points="0.0,111.3 328.5,359.6 661.0,227.9" fill="none" stroke="#0000ff" stroke-width="2.4"/>
<polyline points="0.0,115.8 328.5,364.1 661.0,232.4" fill="none" stroke="#4040ff" stroke-width="0.7"/>
<polyline points="0.0,106.2 328.5,353.8 661.0,222.1" fill="none" stroke="#303048" stroke-width="0.8"/>
<polyline points="0.0,102.7 328.5,350.3 661.0,218.6" fill="none" stroke="#101010" stroke-width="2.0"/>
<line x1="11" y1="111.0" x2="11" y2="119.6" stroke="#303030" stroke-width="0.9"/>
<line x1="11" y1="119.6" x2="11" y2="129.5" stroke="#3030ff" stroke-width="0.8"/>
<line x1="74" y1="158.6" x2="74" y2="167.4" stroke="#303030" stroke-width="0.9"/>
<line x1="74" y1="167.4" x2="74" y2="177.4" stroke="#3030ff" stroke-width="0.8"/>
<line x1="138" y1="207.0" x2="138" y2="215.9" stroke="#303030" stroke-width="0.9"/>
<line x1="138" y1="215.9" x2="138" y2="226.1" stroke="#3030ff" stroke-width="0.8"/>
<line x1="202" y1="255.3" x2="202" y2="264.3" stroke="#303030" stroke-width="0.9"/>
<line x1="202" y1="264.3" x2="202" y2="274.8" stroke="#3030ff" stroke-width="0.8"/>
<line x1="265" y1="302.9" x2="265" y2="312.1" stroke="#303030" stroke-width="0.9"/>
<line x1="265" y1="312.1" x2="265" y2="322.7" stroke="#3030ff" stroke-width="0.8"/>
<line x1="418" y1="314.9" x2="418" y2="324.2" stroke="#303030" stroke-width="0.9"/>
<line x1="418" y1="324.2" x2="418" y2="334.5" stroke="#3030ff" stroke-width="0.8"/>
<line x1="509" y1="278.8" x2="509" y2="288.1" stroke="#303030" stroke-width="0.9"/>
<line x1="509" y1="288.1" x2="509" y2="298.0" stroke="#3030ff" stroke-width="0.8"/>
<line x1="599" y1="243.2" x2="599" y2="252.5" stroke="#303030" stroke-width="0.9"/>
<line x1="599" y1="252.5" x2="599" y2="261.9" stroke="#3030ff" stroke-width="0.8"/>
<line x1="328.5" y1="350.3" x2="328.5" y2="359.6" stroke="#101010" stroke-width="1.6"/>
<line x1="328.5" y1="359.6" x2="328.5" y2="370.40000000000003" stroke="#0000ff" stroke-width="1.6"/>
<g opacity="0.08" fill="#e0e4ff" font-family="Liberation Sans" font-size="9.5"><text x="566" y="21" textLength="48" lengthAdjust="spacingAndGlyphs">COMSOL</text><text x="531" y="30.5" textLength="88" lengthAdjust="spacingAndGlyphs">MULTIPHYSICS</text><circle cx="632" cy="22.5" r="9"/></g>
<g><line x1="43.89999999999998" y1="509.20000000000005" x2="43.89999999999998" y2="489.20000000000005" stroke="#0000ff" stroke-width="2"/><path d="M40.699999999999974,491.20000000000005 L43.89999999999998,482.20000000000005 L47.09999999999998,491.20000000000005Z" fill="#0000ff"/>
<line x1="43.89999999999998" y1="509.20000000000005" x2="62.89999999999998" y2="501.70000000000005" stroke="#ff0000" stroke-width="2"/><path d="M60.89999999999998,497.20000000000005 L69.39999999999998,499.20000000000005 L62.89999999999998,505.20000000000005Z" fill="#ff0000"/>
<line x1="43.89999999999998" y1="509.20000000000005" x2="30.899999999999977" y2="500.70000000000005" stroke="#00e000" stroke-width="2"/><path d="M32.89999999999998,504.20000000000005 L24.899999999999977,496.20000000000005 L35.89999999999998,498.20000000000005Z" fill="#00e000"/></g>
<g font-family="Liberation Sans" font-size="11" fill="#000"><text x="41.299999999999955" y="480">z</text><text x="17.5" y="496.5">y</text><text x="70.5" y="501">x</text></g>
</svg>
<svg class="a" style="left:923px;top:0" width="670" height="9">
<g fill="none" stroke="#506870" stroke-width="1.3">
<circle cx="12.5" cy="-1" r="3.8" fill="#c8d4d8"/><path d="M15.5 1.5 L18.5 4.5"/>
<ellipse cx="35.700000000000045" cy="-1" rx="5" ry="3.5" fill="#c8d4d8"/>
<path d="M54 -2 Q55 3 59 2.5 Q62 1.5 62 -2"/>
<rect x="75.5" y="-3" width="14" height="6" rx="2" stroke-dasharray="2,1"/>
</g>
<path d="M111.5 0 L111.5 7" stroke="#606060" stroke-width="1"/>
<g fill="none" stroke="#506870" stroke-width="2"><circle cx="126.5" cy="-2" r="3.8" fill="#c8d4d8"/><path d="M129.5 1 L134 5"/><circle cx="150" cy="-2" r="3.8" fill="#c8d4d8"/><path d="M153 1 L157.5 5"/></g>
<rect x="168.5" y="-3" width="8" height="6" fill="none" stroke="#506870" stroke-width="1" stroke-dasharray="2,1"/><path d="M176 -1 L181 4" stroke="#506870" stroke-width="2"/>
<path d="M194 1 L202 1" stroke="#2080c0" stroke-width="1" stroke-dasharray="1,1"/><path d="M196 2 L200 2 L198 4.5Z" fill="#20a0d0"/>
<rect x="213.5" y="-3" width="14" height="7.5" fill="#e8f0f8" stroke="#607888" stroke-width="1"/><path d="M217 1 L224 1 L220.5 4Z" fill="#20a0d0"/>
<path d="M234.5 0 L234.5 7" stroke="#606060" stroke-width="1"/>
<path d="M247 -3 L251 3 L257 -3" fill="none" stroke="#20c020" stroke-width="1.2"/><path d="M251 3 L257 -1" stroke="#f04020" stroke-width="1.2"/><path d="M251 3 L251 -3" stroke="#2060e0" stroke-width="1.2"/>
<path d="M283.5 -3 L283.5 2 L294 2" fill="none" stroke="#e84020" stroke-width="1.3"/><path d="M293 0 L296 2 L293 4Z" fill="#e84020"/><path d="M283.5 -3 L283.5 2" stroke="#20c020" stroke-width="1.3"/>
<path d="M306.5 -3 L306.5 2 L317 2" fill="none" stroke="#2080e0" stroke-width="1.3"/><path d="M306.5 2 L317 2" stroke="#20c020" stroke-width="1.3"/><path d="M316 0 L319 2 L316 4Z" fill="#20c020"/>
<path d="M329.5 -3 L329.5 2 L340 2" fill="none" stroke="#2080e0" stroke-width="1.3"/><path d="M329.5 -3 L329.5 2" stroke="#e84020" stroke-width="1.3"/>
<path d="M349.5 0 L349.5 7" stroke="#606060" stroke-width="1"/>
<rect x="362.5" y="-3" width="11" height="6" fill="none" stroke="#20a0d0" stroke-width="1" stroke-dasharray="2,1"/><path d="M359 -2 L363 1" stroke="#506870" stroke-width="1.5"/>
<ellipse cx="391" cy="-1" rx="6" ry="3" fill="#d0d8d8" stroke="#808080"/>
<rect x="401" y="-2" width="23" height="9" fill="#c4dcf4"/><ellipse cx="414.5" cy="-1" rx="7" ry="3" fill="#c8d0d4" stroke="#506870"/>
<ellipse cx="435" cy="-1" rx="6.5" ry="3" fill="#c8d8f0" stroke="#506870"/>
<ellipse cx="458" cy="-1" rx="6.5" ry="3" fill="#d8e0e0" stroke="#506870"/>
<ellipse cx="481" cy="-1" rx="6.5" ry="3" fill="#d8e0e0" stroke="#506870"/>
<path d="M495.5 0 L495.5 7" stroke="#606060" stroke-width="1"/>
<rect x="504" y="-2" width="16" height="9" fill="#c4dcf4"/><path d="M509 -2 L513 2" stroke="#405060" stroke-width="1.5"/><rect x="507" y="-3" width="9" height="6" fill="none" stroke="#e8f0f8"/>
<rect x="524" y="-2" width="45.5" height="9" fill="#c4dcf4"/><path d="M546.5 -2 L546.5 7" stroke="#e0e8f0" stroke-width="1"/>
<rect x="529" y="-3" width="13" height="6" fill="#e8ecec" stroke="#808890"/><rect x="552" y="-3" width="13" height="6" fill="#e0e4e4" stroke="#506870"/>
<path d="M572.5 0 L572.5 7" stroke="#606060" stroke-width="1"/>
<rect x="581" y="-3" width="16" height="7" fill="#708088" stroke="#405058"/>
</svg>
<svg class="a" style="left:922px;top:567px" width="671" height="127">
<rect x="0" y="0" width="671" height="127" fill="#f0f0f0"/>
<!-- folder border -->
<path d="M0.5 127 L0.5 9 Q0.5 3.5 6 3.5 L661 3.5 Q666.5 3.5 666.5 9 L666.5 127" fill="none" stroke="#a0a0a0" stroke-width="1"/>
<!-- results tab active bg -->
<path d="M200.5 26.5 L200.5 9 Q200.5 4 206 4 L276 4 C284 4 289 8 295 15 C301 22 304 26.5 311 26.5 Z" fill="url(#tabg)"/>
<defs><linearGradient id="tabg" x1="0" y1="0" x2="0" y2="1"><stop offset="0" stop-color="#ffffff"/><stop offset="1" stop-color="#f0f0f0"/></linearGradient></defs>
<path d="M200.5 26.5 L200.5 9 Q200.5 3.5 206 3.5 L276 3.5 C284 3.5 289 8 295 15 C301 22 304 26.5 311 26.5 L666 26.5" fill="none" stroke="#a0a0a0" stroke-width="1"/>
<path d="M0.5 26.5 L200.5 26.5" stroke="#a0a0a0" stroke-width="1"/>
<path d="M79.5 26.5 L79.5 9 Q79.5 3.5 85 3.5" fill="none" stroke="#a0a0a0" stroke-width="1"/>
<path d="M152.5 26.5 L152.5 9 Q152.5 3.5 158 3.5" fill="none" stroke="#a0a0a0" stroke-width="1"/>
<!-- toolbar line -->
<path d="M3 51.5 L665 51.5" stroke="#a0a0a0" stroke-width="1"/>
<!-- envelope -->
<rect x="4.5" y="10.5" width="14" height="9.5" fill="#f4f8fb" stroke="#8aa4b8" stroke-width="1.2"/>
<path d="M5 11 L11.5 16.5 L18 11" fill="none" stroke="#8aa4b8" stroke-width="0.9"/>
<!-- progress icon -->
<rect x="83.5" y="12.5" width="15" height="5" fill="#fff" stroke="#8aa4b8" stroke-width="1"/>
<rect x="84" y="13" width="9" height="4" fill="#80d000"/>
<!-- log icon -->
<rect x="156.5" y="8.5" width="14" height="12.5" fill="#fff" stroke="#8aa4b8" stroke-width="1.1"/>
<g fill="#8aa4b8"><rect x="159" y="11" width="1.5" height="1"/><rect x="162.5" y="11" width="1.5" height="1"/><rect x="166" y="11" width="1.5" height="1"/><rect x="159" y="14" width="1.5" height="1"/><rect x="162.5" y="14" width="1.5" height="1"/><rect x="166" y="14" width="1.5" height="1"/><rect x="159" y="17" width="1.5" height="1"/><rect x="162.5" y="17" width="1.5" height="1"/><rect x="166" y="17" width="1.5" height="1"/></g>
<!-- results icon -->
<rect x="206.5" y="8.5" width="11" height="14" fill="#f8fbfd" stroke="#8aa4b8" stroke-width="1.1"/>
<g fill="#2a8ad0"><rect x="208" y="10.5" width="1" height="1"/><rect x="208" y="13" width="1" height="1"/><rect x="208" y="15.5" width="1" height="1"/><rect x="208" y="18" width="1" height="1"/></g>
<g fill="#8aa4b8"><rect x="210" y="10.5" width="6" height="1"/><rect x="210" y="13" width="6" height="1"/><rect x="210" y="15.5" width="5" height="1"/><rect x="210" y="18" width="6" height="1"/></g>
<!-- close X -->
<path d="M269.5 11 L278.5 20 M278.5 11 L269.5 20" stroke="#404040" stroke-width="2.6"/>
<path d="M269.5 11 L278.5 20 M278.5 11 L269.5 20" stroke="#f8f8f8" stroke-width="1.2"/>
<!-- min/max -->
<rect x="632.5" y="8.5" width="9" height="3" fill="#fff" stroke="#606060" stroke-width="1"/>
<rect x="650.5" y="8.5" width="9" height="9.5" fill="#fff" stroke="#606060" stroke-width="1"/>
<path d="M650.5 10.5 L659.5 10.5" stroke="#606060" stroke-width="1.2"/>
<!-- toolbar icons -->
<rect x="6.5" y="32.5" width="15" height="15" rx="2" fill="#c8d8e4" stroke="#8aa4b8" stroke-width="1"/>
<g fill="#20c020"><rect x="9" y="35" width="2" height="2"/><rect x="13" y="35" width="2" height="2"/></g><rect x="17" y="35" width="2" height="2" fill="#f08010"/>
<path d="M10 45 L10 40 M14 45 L14 40 M18 45 L18 39" stroke="#2a5a80" stroke-width="1.3"/><circle cx="10" cy="40" r="1.4" fill="none" stroke="#2a5a80"/><circle cx="14" cy="40" r="1.4" fill="none" stroke="#2a5a80"/><circle cx="18" cy="42" r="1.4" fill="none" stroke="#2a5a80"/>
<text x="29" y="40" font-family="Liberation Mono" font-size="7" fill="#909090">8.85</text>
<text x="29" y="47" font-family="Liberation Mono" font-size="7" fill="#909090">e-12</text>
<path d="M59 32 L59 39" stroke="#a08060" stroke-width="2"/><path d="M56 39 L62 39 L65 47 L53 47Z" fill="#e8c070"/><path d="M55 47 L58 40 M59 47 L60 40 M62 47 L61 40" stroke="#c8a050" stroke-width="0.7"/>
<path d="M77 34 L87 45 M87 34 L77 45" stroke="#f08020" stroke-width="2.4"/>
<path d="M99 32 L99 48 L114 48" fill="none" stroke="#608890" stroke-width="1"/><path d="M100 42 Q103 35 106 41 T112 42" fill="none" stroke="#20c050" stroke-width="1.8"/>
<defs><linearGradient id="pq" x1="0" y1="0" x2="0.6" y2="1"><stop offset="0" stop-color="#ff20e0"/><stop offset="1" stop-color="#4000f0"/></linearGradient></defs>
<rect x="122.5" y="33.5" width="13" height="13" fill="url(#pq)" stroke="#406070" stroke-width="1"/>
<path d="M147 45 L144.5 45 L144.5 34.5 L153.5 34.5 L153.5 37" fill="none" stroke="#a0a0a0" stroke-width="1"/><rect x="149.5" y="38.5" width="9" height="10" fill="none" stroke="#a0a0a0" stroke-width="1"/><path d="M148 42 L153 42 L153 40 L156 43 L153 46 L153 44 L148 44Z" fill="#f0f0f0" stroke="#a0a0a0" stroke-width="0.8"/>
<rect x="167.5" y="35.5" width="13" height="10" rx="1" fill="#d8eef8" stroke="#2a7ab8" stroke-width="1.2"/><path d="M172 40.5 L181 40.5 M178 37 L182.5 40.5 L178 44" fill="none" stroke="#10c0d0" stroke-width="2.2"/>
<g><rect x="192.5" y="33.5" width="13" height="13" fill="#fff" stroke="#8aa4b8" stroke-width="1"/><path d="M192.5 37.5 L205.5 37.5 M192.5 40.5 L205.5 40.5 M192.5 43.5 L205.5 43.5 M196.5 33.5 L196.5 46.5 M200.5 33.5 L200.5 46.5" stroke="#8aa4b8" stroke-width="1"/><rect x="201" y="34" width="4" height="3" fill="#a0e0f8"/><rect x="197" y="38" width="3" height="2" fill="#a0e0f8"/></g>
<path d="M213.5 37.5 L221.5 37.5 L217.5 42Z" fill="#202020"/>
<!-- tab labels -->

</svg>

<div class="a" style="left:946px;top:576px;line-height:14px;font-size:12px;white-space:nowrap;transform-origin:0 0;transform:scaleX(0.916)">Messages</div>
<div class="a" style="left:1025px;top:576px;line-height:14px;font-size:12px;white-space:nowrap;transform-origin:0 0;transform:scaleX(0.925)">Progress</div>
<div class="a" style="left:1098px;top:576px;line-height:14px;font-size:12px;white-space:nowrap;transform-origin:0 0;transform:scaleX(0.97)">Log</div>
<div class="a" style="left:1146px;top:576px;line-height:14px;font-size:12px;white-space:nowrap;transform-origin:0 0;transform:scaleX(0.91)">Results</div>

</body></html>
